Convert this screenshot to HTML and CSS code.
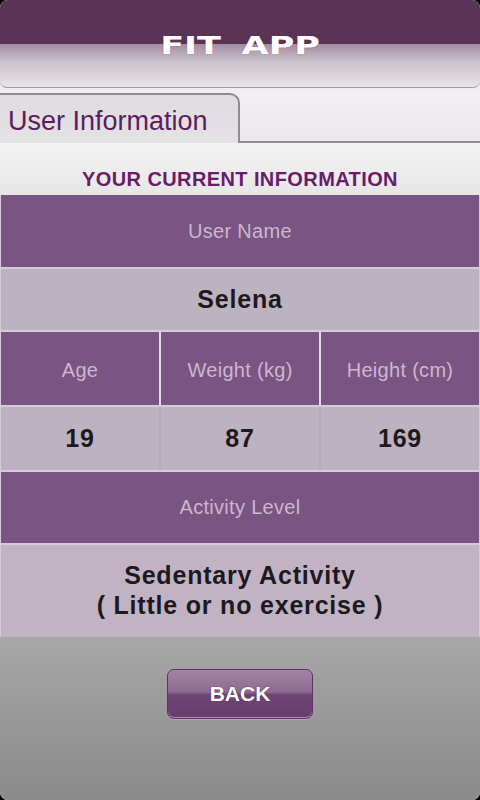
FILE: index.html
```html
<!DOCTYPE html>
<html>
<head>
<meta charset="utf-8">
<link rel="stylesheet" href="styles.css">
</head>
<body>
<div class="app">
  <header class="header">
    <span class="title">FIT APP</span>
  </header>
  <div class="tabs">
    <div class="tab">User Information</div>
    <div class="tab-rest"></div>
  </div>
  <div class="content">
    <div class="heading">YOUR CURRENT INFORMATION</div>
    <div class="table">
      <div class="row head r-name">User Name</div>
      <div class="row val r-selena">Selena</div>
      <div class="row3 head3">
        <div class="cell head">Age</div>
        <div class="cell head">Weight (kg)</div>
        <div class="cell head">Height (cm)</div>
      </div>
      <div class="row3 val3">
        <div class="cell val">19</div>
        <div class="cell val">87</div>
        <div class="cell val">169</div>
      </div>
      <div class="row head r-act">Activity Level</div>
      <div class="row val r-actval">Sedentary Activity<br>( Little or no exercise )</div>
    </div>
  </div>
  <div class="footer">
    <button class="back">BACK</button>
  </div>
</div>
</body>
</html>
```

FILE: styles.css
```css
html, body {
  margin: 0;
  padding: 0;
  background: #000;
}
.app {
  width: 480px;
  height: 800px;
  border-radius: 8px;
  overflow: hidden;
  background: #eeeeee;
  display: flex;
  flex-direction: column;
  font-family: "Liberation Sans", Arial, sans-serif;
}
.header {
  height: 87px;
  border-bottom: 1px solid #9c9a9c;
  border-radius: 0 0 7px 7px;
  background: linear-gradient(to bottom, #5a3457 0, #5a3457 44px, #a38ca2 44px, #cbc2cb 62px, #e8e5e8 100%);
  display: flex;
  align-items: center;
  justify-content: center;
}
.title {
  display: inline-block;
  color: #fff;
  font-family: "DejaVu Sans", sans-serif;
  font-weight: bold;
  font-size: 25px;
  letter-spacing: 0;
  word-spacing: 6px;
  transform: scaleX(1.4);
  margin-top: 3px;
  text-shadow: 0 0 1px rgba(90, 52, 87, 0.5);
}
.tabs {
  margin-top: 5px;
  height: 50px;
  display: flex;
  background: #efedef;
}
.tab {
  border: 2px solid #8e8c8e;
  border-left: none;
  border-bottom: none;
  border-top-right-radius: 10px;
  background: linear-gradient(to bottom, #dedcde, #e4e2e4);
  color: #5e1c5e;
  font-size: 27px;
  padding-left: 8px;
  box-sizing: border-box;
  width: 240px;
  display: flex;
  align-items: center;
  padding-top: 4px;
}
.tab-rest {
  flex: 1;
  border-bottom: 2px solid #8e8c8e;
  background: linear-gradient(to bottom, #f2f0f2, #eae8ea);
}
.content {
  background: linear-gradient(to bottom, #f3f3f3, #e6e6e6 52px);
}
.heading {
  height: 52px;
  display: flex;
  align-items: center;
  justify-content: center;
  color: #6a1b6a;
  font-weight: bold;
  font-size: 20px;
  letter-spacing: 0.4px;
  padding-top: 20px;
  box-sizing: border-box;
}
.table {
  display: flex;
  flex-direction: column;
  gap: 2px;
  padding: 0 1px;
  background: #d6cbd9;
}
.row, .cell {
  display: flex;
  align-items: center;
  justify-content: center;
  text-align: center;
}
.head {
  background: #7a5482;
  color: #cbb7cf;
  font-size: 20px;
  letter-spacing: 0.3px;
}
.val {
  background: #bcb2c0;
  color: #1c1a1e;
  font-weight: bold;
  font-size: 25px;
  letter-spacing: 0.8px;
}
.r-name { height: 72px; }
.r-selena { height: 61px; }
.row3 {
  display: grid;
  grid-template-columns: 158px 158px 158px;
  column-gap: 2px;
}
.head3 { height: 73px; background: #e4d8e8; }
.head3 .cell { padding-top: 3px; }
.val3 { height: 63px; background: #b6acba; }
.val3 .cell { font-size: 25px; }
.r-act { height: 71px; }
.r-actval {
  height: 92px;
  background: #c1b3c4;
  line-height: 30px;
  padding-bottom: 3px;
  box-sizing: border-box;
}
.footer {
  flex: 1;
  background: linear-gradient(to bottom, #a7a7a7, #8a8a8a);
  display: flex;
  justify-content: center;
  align-items: flex-start;
  padding-top: 32px;
}
.back {
  width: 146px;
  height: 50px;
  border-radius: 7px;
  border: 1px solid #5a3560;
  box-shadow: inset 0 -1px 0 #b48db8, 0 1px 0 #b9a7bb;
  background: linear-gradient(to bottom, #a484a6 0, #8c6a91 45%, #6e4474 52%, #683d6d 100%);
  color: #fff;
  font-family: "Liberation Sans", Arial, sans-serif;
  font-weight: bold;
  font-size: 21px;
  text-shadow: 0 0 1px #3a1a3a;
  padding: 0;
}
```
